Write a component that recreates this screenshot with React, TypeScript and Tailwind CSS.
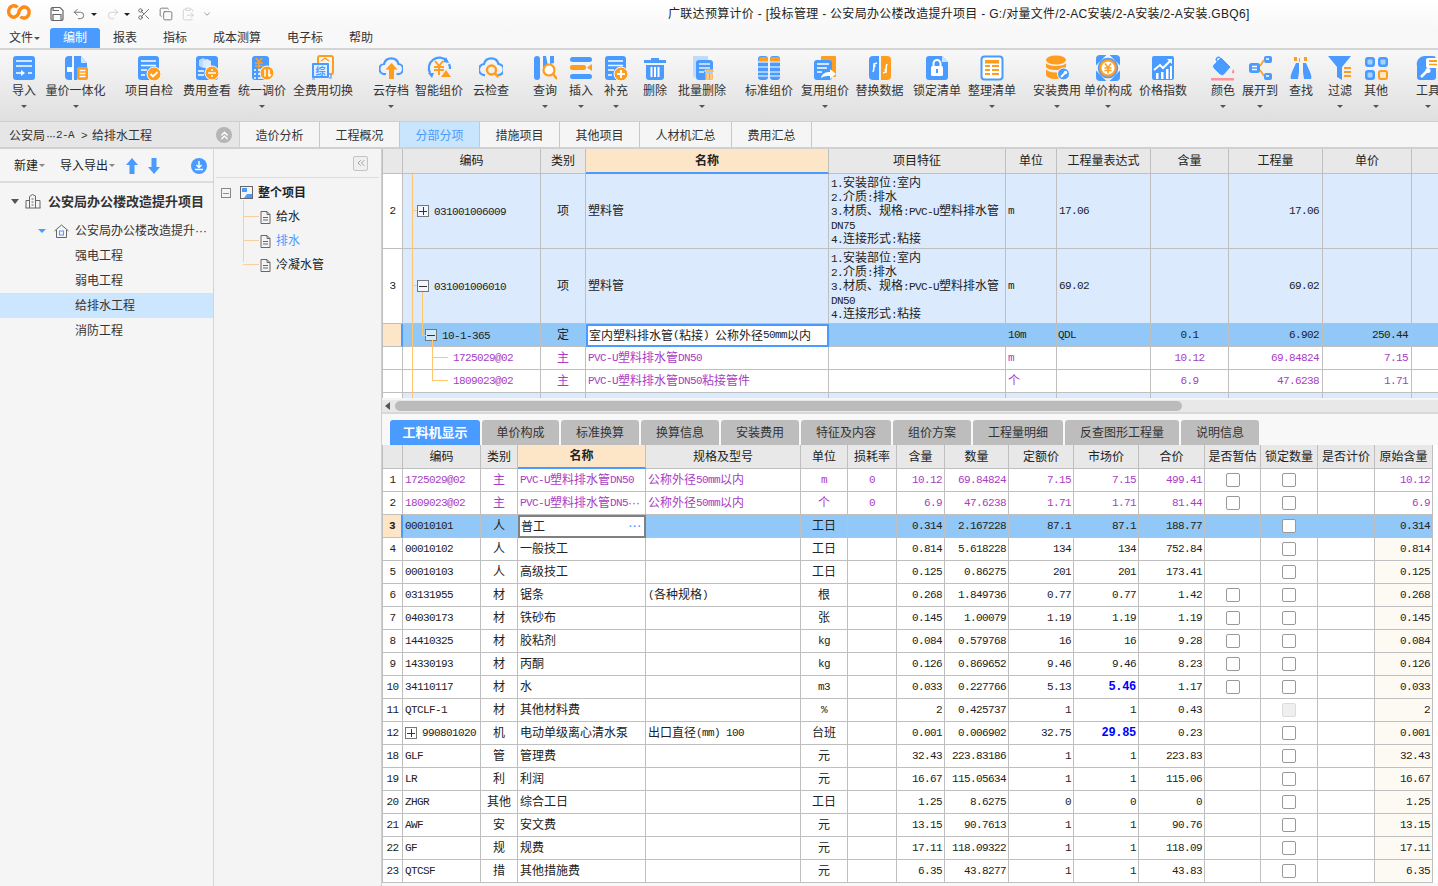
import React from "react";
import { Undo2, Redo2, Scissors, Copy, ClipboardPaste, ChevronDown, ChevronsUp, ChevronsLeft } from "lucide-react";

const B = "#4a9bff";
const O = "#ff9d1e";
const W = "#ffffff";

function T({ s }: { s: string }) {
  const parts = s.split(/([\x00-\x7f]+)/).filter(Boolean);
  return (
    <>
      {parts.map((p, i) =>
        /^[\x00-\x7f]+$/.test(p) ? (
          <span key={i} className="font-['Liberation_Mono',monospace] text-[11px] tracking-[-0.6px] whitespace-pre">{p}</span>
        ) : (
          <span key={i}>{p}</span>
        )
      )}
    </>
  );
}

const icons: Record<string, React.ReactNode> = {
  import: (<>
    <rect x="1" y="1" width="22" height="24" rx="3" fill={B} />
    <path d="M4 6h16M4 11h16M4 18h7M16 18h4" stroke={W} strokeWidth="1.6" />
    <path d="M9 15l4 3-4 3z" fill={W} />
  </>),
  qty: (<>
    <path d="M5 1h3v24H5a4 4 0 0 1-4-4V5a4 4 0 0 1 4-4z" fill={B} />
    <path d="M10 1h7l6 7v5H13v12h-3z" fill={B} />
    <path d="M17 1l6 7h-6z" fill="#cfe4ff" />
    <rect x="3" y="12" width="6" height="5" fill={W} />
    <rect x="13" y="12" width="11" height="13" rx="2" fill={O} />
    <path d="M15.5 15.5h6M15.5 18.5h6M15.5 21.5h6" stroke={W} strokeWidth="1.5" />
  </>),
  check: (<>
    <rect x="1" y="1" width="21" height="24" rx="3" fill={B} />
    <path d="M4 6h15M4 10.500h15M4 15h6M4 20h4" stroke={W} strokeWidth="1.500" />
    <circle cx="17" cy="19" r="7" fill={O} stroke={W} />
    <path d="M13.500 19l2.500 2.500 4.500-4.500" stroke={W} strokeWidth="1.800" fill="none" />
  </>),
  view: (<>
    <rect x="1" y="1" width="22" height="24" rx="3" fill={B} />
    <path d="M4 5l4-2 4 2v6l-4 2-4-2z" fill="#bcd9ff" />
    <path d="M8 6l4-2 4 2v6l-4 2-4-2z" fill="#dcebff" />
    <path d="M3 16h6M3 20h6" stroke={W} strokeWidth="1.500" />
    <circle cx="17" cy="18" r="7" fill={O} stroke={W} />
    <path d="M13 18h8" stroke={W} strokeWidth="1.500" />
    <circle cx="17" cy="15" r="1" fill={W} /><circle cx="17" cy="21" r="1" fill={W} />
  </>),
  price: (<>
    <rect x="2" y="1" width="17" height="24" rx="3" fill={B} />
    <path d="M6 3l3 4 3-4M5 8h8M5 11h8M9 7v7" stroke={O} strokeWidth="1.600" fill="none" />
    <path d="M4 15h2M8 15h4M4 19h2M8 19h4M4 23h2M8 23h4" stroke={W} strokeWidth="1.300" />
    <circle cx="17" cy="18" r="7" fill={O} stroke={W} />
    <path d="M15 14.500v7M19 14.500v7M19 21.500l2-2" stroke={W} strokeWidth="1.600" fill="none" />
  </>),
  all: (<>
    <rect x="7" y="1" width="15" height="18" rx="2" fill="none" stroke={O} strokeWidth="2" />
    <path d="M10 6l4-3 4 3M11 9h6" stroke={O} strokeWidth="1.400" fill="none" />
    <rect x="1" y="8" width="17" height="15" rx="1" fill={B} />
    <rect x="3" y="10" width="13" height="11" fill="#e2efff" />
    <text x="9.500" y="19.500" textAnchor="middle" fontSize="10" fill={B} fontWeight="700">综</text>
    <path d="M20 19v4h-2M1 24h3" stroke={B} strokeWidth="1.200" fill="none" />
  </>),
  cloudUp: (<>
    <path d="M7 19H6a5 5 0 0 1-1-10 7.500 7.500 0 0 1 14.500 0 5 5 0 0 1-1 10h-1" fill="none" stroke={B} strokeWidth="2.200" />
    <path d="M12.500 8l6 6.500h-3.500V24h-5v-9.500H6.500z" fill={O} />
  </>),
  smart: (<>
    <path d="M20 6A10.500 10.500 0 0 0 3 18M5 21" fill="none" stroke={B} strokeWidth="2.200" />
    <path d="M22 9a10 10 0 0 1 1 5" fill="none" stroke={B} strokeWidth="2.200" />
    <path d="M19 2l3 6-6-1zM5 23l-4-5 6 0z" fill={B} />
    <path d="M8 6l4 5 4-5M7 12h10M7 15h10M12 11v9" stroke={O} strokeWidth="2" fill="none" />
    <path d="M19 15l5 7H14z" fill={O} />
  </>),
  cloudFind: (<>
    <path d="M6 20a5.500 5.500 0 0 1-1-11 7.500 7.500 0 0 1 14.500 0 5.500 5.500 0 0 1-.5 11" fill="none" stroke={B} strokeWidth="2.200" />
    <circle cx="12.500" cy="15" r="4.500" fill="none" stroke={O} strokeWidth="2.400" />
    <path d="M16 18.500l3.500 3.500" stroke={O} strokeWidth="2.600" />
  </>),
  query: (<>
    <rect x="1" y="1" width="6" height="24" rx="3" fill={B} />
    <path d="M10 1h3l2 10-5 6z" fill={B} />
    <path d="M17 1h4v7l-4 1z" fill={B} />
    <circle cx="16" cy="15" r="5.500" fill={W} stroke={O} strokeWidth="2.200" />
    <path d="M20 19l4 5" stroke={O} strokeWidth="2.400" />
  </>),
  insert: (<>
    <rect x="1" y="2" width="22" height="5" rx="2.500" fill={B} />
    <rect x="1" y="10" width="16" height="5" rx="2" fill={O} />
    <path d="M23 9v7l-5-3.500z" fill={O} />
    <rect x="1" y="19" width="22" height="5" rx="2.500" fill={B} />
  </>),
  add: (<>
    <rect x="1" y="1" width="21" height="24" rx="3" fill={B} />
    <path d="M4 6h15M4 10.500h15M4 15h6M4 20h4" stroke={W} strokeWidth="1.500" />
    <circle cx="17" cy="19" r="7" fill={O} stroke={W} />
    <path d="M13 19h8M17 15v8" stroke={W} strokeWidth="2" />
  </>),
  del: (<>
    <path d="M8 3h8v2h7v3H1V5h7z" fill={B} />
    <path d="M3 10h18v12a3 3 0 0 1-3 3H6a3 3 0 0 1-3-3z" fill={B} />
    <path d="M8.500 12v10M12 12v10M15.500 12v10" stroke={W} strokeWidth="2" />
  </>),
  batch: (<>
    <path d="M3 1h15v22H6a3 3 0 0 1-3-3z" fill="#bfdcff" />
    <rect x="6" y="5" width="17" height="20" rx="3" fill={B} />
    <path d="M9 9h11M9 13h11M9 17h5" stroke="#e4f0ff" strokeWidth="1.300" />
    <path d="M15 15h9v2h-9zM16 18h7v7h-7z" fill={O} stroke={W} strokeWidth=".6" />
    <path d="M18 19v5M21 19v5" stroke={W} />
  </>),
  std: (<>
    <rect x="1" y="1" width="10" height="24" rx="3" fill={B} />
    <rect x="13" y="1" width="10" height="24" rx="3" fill={B} />
    <path d="M2 5.500a3 3 0 0 1 2-3.500h5a3 3 0 0 1 2 3.500v1H1zM13 5.500a3 3 0 0 1 2-3.500h5a3 3 0 0 1 3 3.500v1H13z" fill={O} />
    <path d="M1 7h10M13 7h10M1 12h10M13 12h10M1 17h10M13 17h10M1 21h10M13 21h10" stroke={W} strokeWidth="1.200" />
  </>),
  reuse: (<>
    <rect x="8" y="1" width="15" height="21" rx="1" fill={O} />
    <rect x="1" y="5" width="18" height="20" rx="3" fill={B} />
    <path d="M4 9h12M4 13h10M4 17h5" stroke={W} strokeWidth="1.400" />
    <path d="M8 23c1-5 5-6 9-6v-3l6 5-6 5v-3c-3 0-6 0-9 2z" fill={W} />
  </>),
  swap: (<>
    <path d="M5 1h6v24H5a4 4 0 0 1-4-4V5a4 4 0 0 1 4-4z" fill={B} />
    <path d="M13 1h6a4 4 0 0 1 4 4v16a4 4 0 0 1-4 4h-6z" fill={O} />
    <path d="M9 8l-3 1 1 3M6 9c0 4 0 6-1 8M15 18l3-1-1-3M18 17c0-4 0-6 1-8" stroke={W} strokeWidth="1.600" fill="none" />
  </>),
  lock: (<>
    <path d="M4 1h13l6 6v15a3 3 0 0 1-3 3H4a3 3 0 0 1-3-3V4a3 3 0 0 1 3-3z" fill={B} />
    <path d="M17 1l6 6h-6z" fill="#cfe4ff" />
    <rect x="6" y="11" width="12" height="10" rx="1.500" fill={W} />
    <path d="M8.500 11V8.500a3.500 3.500 0 0 1 7 0V11" stroke={W} strokeWidth="2" fill="none" />
    <rect x="11" y="14" width="2" height="4" fill={B} />
  </>),
  tidy: (<>
    <rect x="1.500" y="1.500" width="21" height="23" rx="3" fill="#fff" stroke={B} strokeWidth="2" />
    <rect x="5" y="5" width="14" height="3.500" fill={O} />
    <path d="M5 11h5M12 11h7M5 15h5M12 15h7M5 19h5M12 19h7" stroke={O} strokeWidth="2" />
  </>),
  install: (<>
    <ellipse cx="11" cy="5" rx="10" ry="4.500" fill={O} />
    <path d="M1 8c2 4 18 4 20 0v4c-2 4-18 4-20 0z" fill={O} />
    <path d="M1 14c2 4 12 4 15 3v6c-5 2-13 1-15-3z" fill={O} />
    <circle cx="18.500" cy="19" r="6" fill={B} stroke={W} />
    <path d="M16 22l4-4" stroke={W} strokeWidth="2" />
    <circle cx="20.500" cy="17.500" r="1.800" fill={W} />
  </>),
  unit: (<>
    <path d="M1 8V4a3 3 0 0 1 3-3h4zM16 1h4a3 3 0 0 1 3 3v4zM1 18v4a3 3 0 0 0 3 3h4zM23 18v4a3 3 0 0 1-3 3h-4z" fill={B} stroke={B} strokeWidth="2" />
    <circle cx="12" cy="13" r="9.500" fill={O} stroke={B} strokeWidth="1.500" />
    <circle cx="12" cy="13" r="6.500" fill={W} />
    <path d="M9 8.500l3 4 3-4M8.500 13h7M8.500 15.500h7M12 12.500V18.500" stroke={O} strokeWidth="1.600" fill="none" />
  </>),
  index: (<>
    <rect x="1" y="1" width="22" height="24" rx="2" fill={B} />
    <path d="M3 15l6-5 3 3 8-8" stroke={W} strokeWidth="2" fill="none" />
    <path d="M16 4h5v5z" fill={W} />
    <path d="M5 24v-6h2.500v6zM10 24v-7h2.500v7zM15 24v-10h2.500v10zM19 24V11h2v13z" fill={W} />
  </>),
  color: (<>
    <path d="M10 2l10 10-7 8c-2 1-3 0-4 0l-7-7c-1-2 0-3 1-4z" fill={B} stroke="#e9f2ff" />
    <path d="M9 3c-2-2-5 1-3 3l3 4" fill="none" stroke={B} strokeWidth="1.500" />
    <path d="M22 14c1.500 2 2 3 1 4s-2.500 0-2-1z" fill="#ff8f96" />
    <rect x="0" y="23" width="23" height="2.500" fill="#ff9298" />
  </>),
  expand: (<>
    <rect x="1" y="8" width="11" height="10" rx="2.500" fill={B} />
    <path d="M4 11.500h5M4 14.500h5" stroke={W} strokeWidth="1.300" />
    <rect x="16" y="1" width="8" height="7" rx="2" fill={B} />
    <rect x="16" y="18" width="8" height="7" rx="2" fill={B} />
    <path d="M18 4h3M18 21h3" stroke={W} strokeWidth="1.400" />
    <path d="M12 11l4-6M12 15l4 6" stroke={O} strokeWidth="1.600" />
  </>),
  find: (<>
    <path d="M7 8h3v9l-1 7H2c-1-2 0-4 1-7z" fill={B} />
    <path d="M14 8h3l4 9c1 3 2 5 1 7h-7l-1-7z" fill={B} />
    <path d="M5 2h3v4H5zM15 2h3v4h-3zM10 3h1v4h-1z" fill={O} />
  </>),
  filter: (<>
    <path d="M0 1h23l-9 11v13l-5-3V12z" fill={B} />
    <path d="M16 13h7M16 17h7M16 21h7" stroke={O} strokeWidth="1.800" />
  </>),
  other: (<>
    <rect x="1" y="2" width="10" height="10" rx="3" fill={B} />
    <rect x="14" y="2" width="10" height="10" rx="3" fill={B} />
    <rect x="1" y="15" width="10" height="10" rx="3" fill={B} />
    <rect x="15" y="16" width="8" height="8" rx="2" fill="#ffe7c8" stroke={O} strokeWidth="2" />
    <rect x="3.500" y="4.500" width="5" height="5" rx="1" fill="#a9d0ff" />
    <rect x="16.500" y="4.500" width="5" height="5" rx="1" fill="#a9d0ff" />
    <rect x="3.500" y="17.500" width="5" height="5" rx="1" fill="#a9d0ff" />
  </>),
  tool: (<>
    <path d="M9 1h8a3 3 0 0 1 3 3v18a3 3 0 0 1-3 3H4a3 3 0 0 1-3-3V11a8 8 0 0 1 8-10z" fill={B} />
    <rect x="10" y="3" width="14" height="10" rx="2" fill={W} />
    <path d="M13 6h8" stroke={O} strokeWidth="2" /><path d="M13 9.500h8" stroke={O} strokeWidth="1.500" />
    <path d="M5 22l6-6" stroke={W} strokeWidth="2.500" /><circle cx="12" cy="15.500" r="2.500" fill={W} />
  </>),
};

type RibbonItem = [string, string, string, boolean];
const ribbon: RibbonItem[] = [
  ["导入", "import", "ml-[4px] w-[40px]", true],
  ["量价一体化", "qty", "w-[63px]", true],
  ["项目自检", "check", "ml-[13px] w-[58px]", false],
  ["费用查看", "view", "w-[58px]", false],
  ["统一调价", "price", "w-[52px]", true],
  ["全费用切换", "all", "w-[70px]", false],
  ["云存档", "cloudUp", "ml-[9px] w-[48px]", true],
  ["智能组价", "smart", "w-[48px]", false],
  ["云检查", "cloudFind", "w-[56px]", false],
  ["查询", "query", "ml-[6px] w-[40px]", true],
  ["插入", "insert", "w-[32px]", true],
  ["补充", "add", "w-[38px]", true],
  ["删除", "del", "w-[40px]", false],
  ["批量删除", "batch", "w-[54px]", true],
  ["标准组价", "std", "ml-[12px] w-[56px]", false],
  ["复用组价", "reuse", "w-[56px]", true],
  ["替换数据", "swap", "w-[53px]", false],
  ["锁定清单", "lock", "w-[62px]", false],
  ["整理清单", "tidy", "w-[48px]", true],
  ["安装费用", "install", "ml-[17px] w-[48px]", true],
  ["单价构成", "unit", "w-[54px]", true],
  ["价格指数", "index", "w-[56px]", false],
  ["颜色", "color", "ml-[14px] w-[36px]", true],
  ["展开到", "expand", "w-[38px]", true],
  ["查找", "find", "w-[44px]", false],
  ["过滤", "filter", "w-[34px]", true],
  ["其他", "other", "w-[38px]", true],
  ["工具", "tool", "ml-[18px] w-[30px]", true],
];

function Caret({ c = "border-t-[#555]" }: { c?: string }) {
  return <span className={`inline-block w-0 h-0 border-l-[3px] border-r-[3px] border-t-[3px] border-l-transparent border-r-transparent ${c}`} />;
}

function TitleBar() {
  return (
    <div className="h-[28px] flex items-center bg-gradient-to-b from-white to-[#f8f8f8] text-[#333]">
      <svg width="24" height="18" viewBox="0 0 24 18" className="ml-[7px] -mt-[4px]" fill="none">
        <path d="M10.500 4.500C8 1.500 3 2.500 1.900 7c-1 4 2 8 6 7 1.500-.5 3-2 4.500-5" stroke="#ff8a14" strokeWidth="3.400" />
        <path d="M13.500 13.500c2 2.500 7.500 2 8.500-3 .800-4-2-7-5.500-6.500-2 .5-3.500 2-5 5" stroke="#ff8a14" strokeWidth="3.400" />
      </svg>
      <svg width="16" height="16" viewBox="0 0 16 16" className="ml-[18px]" fill="none" stroke="#666" strokeWidth="1.200">
        <path d="M3 1.500h8l3 3V13a1.500 1.500 0 0 1-1.500 1.500h-9A1.500 1.500 0 0 1 2 13V3z" />
        <path d="M4 14.500V8.500h8v6M4 1.500v3h6" />
      </svg>
      <Undo2 className="ml-[7px] w-[14px] h-[14px] text-[#666]" strokeWidth={1.5} />
      <span className="ml-[5px] inline-flex"><Caret c="border-t-[#222]" /></span>
      <Redo2 className="ml-[9px] w-[14px] h-[14px] text-[#ccc]" strokeWidth={1.5} />
      <span className="ml-[4px] inline-flex"><Caret c="border-t-[#222]" /></span>
      <Scissors className="ml-[7px] w-[14px] h-[14px] text-[#555]" strokeWidth={1.4} />
      <Copy className="ml-[8px] w-[14px] h-[14px] text-[#666]" strokeWidth={1.4} />
      <ClipboardPaste className="ml-[8px] w-[14px] h-[14px] text-[#ccc]" strokeWidth={1.4} />
      <ChevronDown className="ml-[7px] w-[10px] h-[10px] text-[#888]" strokeWidth={2} />
      <span className="ml-[456px] whitespace-nowrap text-[12px] tracking-[0.3px] text-[#222]">广联达预算计价 - [投标管理 - 公安局办公楼改造提升项目 - G:/对量文件/2-AC安装/2-A安装/2-A安装.GBQ6]</span>
    </div>
  );
}

function MenuBar() {
  return (
    <div className="h-[20px] flex items-stretch bg-[#f8f8f8] text-[12px] text-[#333]">
      <span className="ml-[9px] w-[41px] flex items-center gap-[1px]">文件<Caret /></span>
      <span className="w-[50px] flex items-center justify-center bg-[#4a9bff] text-white rounded-t-[3px]">编制</span>
      <span className="ml-[13px] w-[24px] flex items-center">报表</span>
      <span className="ml-[26px] w-[24px] flex items-center">指标</span>
      <span className="ml-[26px] w-[48px] flex items-center">成本测算</span>
      <span className="ml-[26px] w-[36px] flex items-center">电子标</span>
      <span className="ml-[26px] w-[24px] flex items-center">帮助</span>
    </div>
  );
}

function Ribbon() {
  return (
    <div className="h-[74px] border-t-2 border-[#d4d4d4] bg-gradient-to-b from-[#f8f8f8] to-[#dfdfdf] flex overflow-hidden border-b border-b-[#cfcfcf] text-[12px] text-[#333]">
      {ribbon.map(([label, icon, cls, caret]) => (
        <div key={label} className={`${cls} shrink-0 flex flex-col items-center pt-[5px]`}>
          <svg width="24" height="26" viewBox="0 0 24 26" className="shrink-0">{icons[icon]}</svg>
          <span className="mt-[2px] h-[17px] leading-[17px] whitespace-nowrap">{label}</span>
          {caret && <span className="mt-[5px] flex"><Caret /></span>}
        </div>
      ))}
    </div>
  );
}

const topTabs = [
  ["造价分析", "w-[80px]"], ["工程概况", "w-[80px]"], ["分部分项", "w-[80px]"], ["措施项目", "w-[80px]"],
  ["其他项目", "w-[80px]"], ["人材机汇总", "w-[92px]"], ["费用汇总", "w-[80px]"],
];

function TabBar() {
  return (
    <div className="h-[27px] flex bg-[#f5f5f5] text-[12px] text-[#333] border-b-2 border-[#d0d0d0]">
      <div className="w-[240px] bg-[#e6e6e6] flex items-center pl-[9px] pr-[8px] pt-[2px] border-r border-[#d0d0d0] relative">
        <span>公安局</span><span className="ml-[1px] mr-[1px] tracking-[-1px]">···</span><T s="2-A" /><span className="ml-[7px]"><T s=">" /></span><span className="ml-[5px]">给排水工程</span>
        <span className="absolute left-[216px] top-[5px] w-[16px] h-[16px] rounded-full bg-[#b5b5b5] flex items-center justify-center">
          <ChevronsUp className="w-[13px] h-[13px] text-white" strokeWidth={2.5} />
        </span>
      </div>
      {topTabs.map(([t, w]) => (
        <div key={t} className={`${w} flex items-center justify-center pt-[2px] border-r border-[#c8c8c8] ${t === "分部分项" ? "bg-[#c9e5fe] text-[#4a9bff]" : ""}`}>{t}</div>
      ))}
    </div>
  );
}

function Doc() {
  return (
    <svg width="11" height="13" viewBox="0 0 11 13" fill="none" stroke="#666" strokeWidth="1">
      <path d="M1 .5h6l3 3v9H1zM7 .5v3h3M3 6.500h5M3 9h5" />
    </svg>
  );
}

function Sidebar() {
  return (
    <div className="w-[214px] shrink-0 bg-[#f5f5f5] border-r border-[#d4d4d4] text-[12px] text-[#333] flex flex-col">
      <div className="h-[34px] pt-[1px] flex items-center border-b-2 border-[#dcdcdc] relative">
        <span className="ml-[14px] text-[#222]">新建</span><span className="ml-[1px] flex"><Caret c="border-t-[#888]" /></span>
        <span className="ml-[15px] text-[#222]">导入导出</span><span className="ml-[1px] flex"><Caret c="border-t-[#888]" /></span>
        <svg width="12" height="16" viewBox="0 0 12 16" className="ml-[11px]"><path d="M6 0l6 7H8.500v9h-5V7H0z" fill={B} /></svg>
        <svg width="12" height="16" viewBox="0 0 12 16" className="ml-[10px]"><path d="M6 16l6-7H8.500V0h-5v9H0z" fill={B} /></svg>
        <span className="ml-[31px] w-[16px] h-[16px] rounded-full bg-[#4a9bff] flex items-center justify-center">
          <svg width="10" height="10" viewBox="0 0 10 10" fill="none" stroke="white" strokeWidth="1.400"><path d="M5 0v6M2.500 4L5 6.500 7.500 4M1 8.500h8" /></svg>
        </span>
      </div>
      <div className="pt-[3px] flex flex-col">
        <div className="h-[30px] flex items-center">
          <span className="ml-[11px] flex"><span className="w-0 h-0 border-l-[4px] border-r-[4px] border-t-[5px] border-l-transparent border-r-transparent border-t-[#555]" /></span>
          <svg width="16" height="16" viewBox="0 0 16 16" className="ml-[6px]" fill="none" stroke="#666"><path d="M4.500 15V3.500l3-2 3 1.500V15M1 15V7.500h3.500M11 7.500h4V15M.5 15h15M6.500 6h2M6.500 9h2M6.500 12h2" /></svg>
          <span className="ml-[7px] font-bold text-[13px] text-[#333] whitespace-nowrap">公安局办公楼改造提升项目</span>
        </div>
        <div className="h-[27px] pt-[3px] flex items-center">
          <span className="ml-[38px] flex"><span className="w-0 h-0 border-l-[4px] border-r-[4px] border-t-[4px] border-l-transparent border-r-transparent border-t-[#4a9bff]" /></span>
          <svg width="15" height="14" viewBox="0 0 15 14" className="ml-[8px]" fill="none" stroke="#666"><path d="M.5 7l7-6 7 6M2.500 6v7.500h10V6" /><rect x="5.500" y="7" width="4" height="4" stroke={B} /></svg>
          <span className="ml-[6px] whitespace-nowrap">公安局办公楼改造提升···</span>
        </div>
        {["强电工程", "弱电工程", "给排水工程", "消防工程"].map((t) => (
          <div key={t} className={`h-[25px] flex items-center pl-[75px] ${t === "给排水工程" ? "bg-[#cbe6fe]" : ""}`}>{t}</div>
        ))}
      </div>
    </div>
  );
}

function MidPanel() {
  return (
    <div className="w-[168px] shrink-0 bg-[#f4f4f4] border-r border-[#cfcfcf] text-[12px] text-[#222] flex flex-col relative">
      <div className="h-[29px] mx-[2px] border-b border-[#dcdcdc] flex items-center justify-end pr-[11px]">
        <span className="w-[15px] h-[15px] border border-[#c4c4c4] rounded-[2px] flex items-center justify-center bg-[#efefef]">
          <ChevronsLeft className="w-[12px] h-[12px] text-[#888]" strokeWidth={1.5} />
        </span>
      </div>
      <div className="relative pt-[3px]">
        <div className="h-[24px] flex items-center">
          <span className="ml-[7px] w-[10px] h-[10px] border border-[#888] flex items-center justify-center"><span className="w-[6px] h-[1px] bg-[#4a9bff]" /></span>
          <svg width="14" height="14" viewBox="0 0 14 14" className="ml-[9px]" fill="none"><rect x=".5" y=".5" width="12" height="12" stroke="#666" /><rect x="2" y="2" width="5" height="4" fill={B} /><path d="M4 12l3-4 5 0v4z" fill={B} /></svg>
          <span className="ml-[4px] font-bold">整个项目</span>
        </div>
        {["给水", "排水", "冷凝水管"].map((t) => (
          <div key={t} className="h-[24px] flex items-center relative">
            <span className="absolute left-[29px] top-[11px] w-[16px] h-[1px] bg-[#f9cf9c]" />
            <span className="ml-[46px] flex"><Doc /></span>
            <span className={`ml-[5px] ${t === "排水" ? "text-[#4a9bff]" : ""}`}>{t}</span>
          </div>
        ))}
        <span className="absolute left-[29px] top-[22px] w-[1px] h-[62px] bg-[#f9cf9c]" />
      </div>
    </div>
  );
}

const bd = "border-r border-b border-[#bfbfbf]";

function HeadCell({ t, active }: { t: string; active?: boolean }) {
  return (
    <div className={`${bd} flex items-center justify-center whitespace-nowrap overflow-hidden ${active ? "bg-[#fde6c8] font-bold border-b-2 border-b-[#4a9bff]" : "bg-[#e8e8e8]"}`}>{t}</div>
  );
}

const fline = (dn: string) => [`1.安装部位:室内`, `2.介质:排水`, `3.材质、规格:PVC-U塑料排水管`, dn, `4.连接形式:粘接`];

function Box({ sign, cls = "" }: { sign: "+" | "-"; cls?: string }) {
  return (
    <span className={`w-[12px] h-[12px] bg-white/60 border border-[#777] flex items-center justify-center relative shrink-0 ${cls}`}>
      <span className="w-[8px] h-[1px] bg-[#333]" />
      {sign === "+" && <span className="absolute w-[1px] h-[8px] bg-[#333]" />}
    </span>
  );
}

function UpperItem({ n, code, sign, dn, qty }: { n: string; code: string; sign: "+" | "-"; dn: string; qty: string }) {
  const c = `${bd} bg-[#dceafd] flex items-center`;
  return (
    <>
      <div className={`${bd} bg-white flex items-center justify-center`}><T s={n} /></div>
      <div className={`${c} pl-[14px]`}><Box sign={sign} /><span className="ml-[5px]"><T s={code} /></span></div>
      <div className={`${c} justify-center`}>项</div>
      <div className={`${c} pl-[2px]`}>塑料管</div>
      <div className={`${c} flex-col !items-start justify-center pl-[2px]`}>
        {fline(dn).map((l) => <div key={l} className="h-[14px] leading-[14px] whitespace-nowrap"><T s={l} /></div>)}
      </div>
      <div className={`${c} pl-[2px]`}><T s="m" /></div>
      <div className={`${c} pl-[2px]`}><T s={qty} /></div>
      <div className={c} />
      <div className={`${c} justify-end pr-[3px]`}><T s={qty} /></div>
      <div className={c} />
      <div className={c} />
    </>
  );
}

function SubItem({ code, name, unit, hl, qty, price }: { code: string; name: string; unit: string; hl: string; qty: string; price: string }) {
  const c = `${bd} bg-white flex items-center text-[#a93cc4]`;
  return (
    <>
      <div className={c} />
      <div className={`${c} pl-[50px]`}><T s={code} /></div>
      <div className={`${c} justify-center`}>主</div>
      <div className={`${c} pl-[2px]`}><T s={name} /></div>
      <div className={c} />
      <div className={`${c} pl-[2px]`}><T s={unit} /></div>
      <div className={c} />
      <div className={`${c} justify-center`}><T s={hl} /></div>
      <div className={`${c} justify-end pr-[3px]`}><T s={qty} /></div>
      <div className={`${c} justify-end pr-[3px]`}><T s={price} /></div>
      <div className={c} />
    </>
  );
}

function UpperTable() {
  const h = `${bd} bg-[#92c8f7] flex items-center`;
  return (
    <div className="h-[249px] overflow-hidden relative bg-white">
      <div className="grid grid-cols-[20px_138px_45px_243px_177px_51px_94px_78px_94px_89px_29px] grid-rows-[25px_75px_75px_23px_23px_23px_23px] border-l border-[#bfbfbf]">
        {["", "编码", "类别", "名称", "项目特征", "单位", "工程量表达式", "含量", "工程量", "单价", ""].map((t, i) => (
          <HeadCell key={i} t={t} active={t === "名称"} />
        ))}
        <UpperItem n="2" code="031001006009" sign="+" dn="DN75" qty="17.06" />
        <UpperItem n="3" code="031001006010" sign="-" dn="DN50" qty="69.02" />
        <div className={`${bd} bg-[#fde6c8] border-r-2 border-r-[#4a9bff]`} />
        <div className={`${h} pl-[22px]`}><Box sign="-" cls="bg-transparent" /><span className="ml-[5px]"><T s="10-1-365" /></span></div>
        <div className={`${h} justify-center`}>定</div>
        <div className="bg-white border-2 border-[#4a9bff] flex items-center pl-[1px] whitespace-nowrap overflow-hidden"><T s="室内塑料排水管(粘接) 公称外径50mm以内" /></div>
        <div className={h} />
        <div className={`${h} pl-[2px]`}><T s="10m" /></div>
        <div className={`${h} pl-[1px]`}><T s="QDL" /></div>
        <div className={`${h} justify-center`}><T s="0.1" /></div>
        <div className={`${h} justify-end pr-[3px]`}><T s="6.902" /></div>
        <div className={`${h} justify-end pr-[3px]`}><T s="250.44" /></div>
        <div className={h} />
        <SubItem code="1725029@02" name="PVC-U塑料排水管DN50" unit="m" hl="10.12" qty="69.84824" price="7.15" />
        <SubItem code="1809023@02" name="PVC-U塑料排水管DN50粘接管件" unit="个" hl="6.9" qty="47.6238" price="1.71" />
        {Array.from({ length: 11 }).map((_, i) => (
          <div key={i} className={`${bd} ${i === 0 ? "bg-white" : "bg-[#dceafd]"}`} />
        ))}
      </div>
      <span className="absolute left-[30px] top-[25px] w-[1px] h-[224px] bg-[#ffc670]" />
      <span className="absolute left-[30px] top-[61px] w-[5px] h-[1px] bg-[#ffc670]" />
      <span className="absolute left-[30px] top-[136px] w-[5px] h-[1px] bg-[#ffc670]" />
      <span className="absolute left-[40px] top-[143px] w-[1px] h-[43px] bg-[#ffc670]" />
      <span className="absolute left-[40px] top-[186px] w-[4px] h-[1px] bg-[#ffc670]" />
      <span className="absolute left-[50px] top-[191px] w-[1px] h-[40px] bg-[#ffc670]" />
      <span className="absolute left-[50px] top-[208px] w-[16px] h-[1px] bg-[#ffc670]" />
      <span className="absolute left-[50px] top-[231px] w-[16px] h-[1px] bg-[#ffc670]" />
    </div>
  );
}

function ScrollBar() {
  return (
    <div className="h-[16px] bg-[#f5f5f5] pt-[2px] border-b-2 border-[#d8d8d8]">
      <div className="h-[12px] bg-[#e8e8e8] flex items-center pl-[3px]">
        <span className="w-0 h-0 border-t-[4px] border-b-[4px] border-r-[5px] border-t-transparent border-b-transparent border-r-[#555]" />
        <span className="ml-[5px] w-[787px] h-[10px] rounded-[5px] bg-[#bbbbbb]" />
      </div>
    </div>
  );
}

const lowerTabs: [string, string][] = [
  ["工料机显示", "w-[90px]"], ["单价构成", "w-[77px]"], ["标准换算", "w-[78px]"], ["换算信息", "w-[78px]"], ["安装费用", "w-[78px]"],
  ["特征及内容", "w-[90px]"], ["组价方案", "w-[78px]"], ["工程量明细", "w-[90px]"], ["反查图形工程量", "w-[114px]"], ["说明信息", "w-[78px]"],
];

function LowerTabs() {
  return (
    <div className="h-[31px] bg-[#f8f8f8] pt-[6px] pl-[8px] flex gap-[2px] text-[12px] text-[#333]">
      {lowerTabs.map(([t, w]) => (
        <div key={t} className={`${w} rounded-t-[3px] flex items-center justify-center ${t === "工料机显示" ? "bg-[#4a9bff] text-white font-bold text-[13px]" : "bg-[#bdbdbd]"}`}>{t}</div>
      ))}
    </div>
  );
}

type Row = { n: string; code: string; type: string; name: string; spec?: string; unit: string; loss?: string; hl: string; qty: string; dj: string; sc: string; hj: string; zg?: boolean; ys?: string; disabled?: boolean; blue?: boolean; plus?: boolean };

const rows: Row[] = [
  { n: "1", code: "1725029@02", type: "主", name: "PVC-U塑料排水管DN50", spec: "公称外径50mm以内", unit: "m", loss: "0", hl: "10.12", qty: "69.84824", dj: "7.15", sc: "7.15", hj: "499.41", zg: true },
  { n: "2", code: "1809023@02", type: "主", name: "PVC-U塑料排水管DN5···", spec: "公称外径50mm以内", unit: "个", loss: "0", hl: "6.9", qty: "47.6238", dj: "1.71", sc: "1.71", hj: "81.44", zg: true },
  { n: "3", code: "00010101", type: "人", name: "普工", unit: "工日", hl: "0.314", qty: "2.167228", dj: "87.1", sc: "87.1", hj: "188.77" },
  { n: "4", code: "00010102", type: "人", name: "一般技工", unit: "工日", hl: "0.814", qty: "5.618228", dj: "134", sc: "134", hj: "752.84" },
  { n: "5", code: "00010103", type: "人", name: "高级技工", unit: "工日", hl: "0.125", qty: "0.86275", dj: "201", sc: "201", hj: "173.41" },
  { n: "6", code: "03131955", type: "材", name: "锯条", spec: "(各种规格)", unit: "根", hl: "0.268", qty: "1.849736", dj: "0.77", sc: "0.77", hj: "1.42", zg: true },
  { n: "7", code: "04030173", type: "材", name: "铁砂布", unit: "张", hl: "0.145", qty: "1.00079", dj: "1.19", sc: "1.19", hj: "1.19", zg: true },
  { n: "8", code: "14410325", type: "材", name: "胶粘剂", unit: "kg", hl: "0.084", qty: "0.579768", dj: "16", sc: "16", hj: "9.28", zg: true },
  { n: "9", code: "14330193", type: "材", name: "丙酮", unit: "kg", hl: "0.126", qty: "0.869652", dj: "9.46", sc: "9.46", hj: "8.23", zg: true },
  { n: "10", code: "34110117", type: "材", name: "水", unit: "m3", hl: "0.033", qty: "0.227766", dj: "5.13", sc: "5.46", hj: "1.17", zg: true, blue: true },
  { n: "11", code: "QTCLF-1", type: "材", name: "其他材料费", unit: "%", hl: "2", qty: "0.425737", dj: "1", sc: "1", hj: "0.43", disabled: true },
  { n: "12", code: "990801020", type: "机", name: "电动单级离心清水泵", spec: "出口直径(mm) 100", unit: "台班", hl: "0.001", qty: "0.006902", dj: "32.75", sc: "29.85", hj: "0.23", blue: true, plus: true },
  { n: "18", code: "GLF", type: "管", name: "管理费", unit: "元", hl: "32.43", qty: "223.83186", dj: "1", sc: "1", hj: "223.83" },
  { n: "19", code: "LR", type: "利", name: "利润", unit: "元", hl: "16.67", qty: "115.05634", dj: "1", sc: "1", hj: "115.06" },
  { n: "20", code: "ZHGR", type: "其他", name: "综合工日", unit: "工日", hl: "1.25", qty: "8.6275", dj: "0", sc: "0", hj: "0" },
  { n: "21", code: "AWF", type: "安", name: "安文费", unit: "元", hl: "13.15", qty: "90.7613", dj: "1", sc: "1", hj: "90.76" },
  { n: "22", code: "GF", type: "规", name: "规费", unit: "元", hl: "17.11", qty: "118.09322", dj: "1", sc: "1", hj: "118.09" },
  { n: "23", code: "QTCSF", type: "措", name: "其他措施费", unit: "元", hl: "6.35", qty: "43.8277", dj: "1", sc: "1", hj: "43.83" },
];

function Chk({ disabled }: { disabled?: boolean }) {
  return <span className={`w-[14px] h-[14px] rounded-[2px] border ${disabled ? "bg-[#efefef] border-[#dcdcdc]" : "bg-white border-[#999]"}`} />;
}

function LowerRow({ r }: { r: Row }) {
  const sel = r.n === "3";
  const pink = r.n === "1" || r.n === "2";
  const c = `${bd} flex items-center ${sel ? "bg-[#92c8f7]" : "bg-white"} ${pink ? "text-[#a93cc4]" : ""}`;
  const right = `${c} justify-end pr-[2px]`;
  const mid = `${c} justify-center`;
  return (
    <>
      <div className={`${bd} flex items-center justify-center ${sel ? "bg-[#fde6c8] font-bold border-r-2 border-r-[#4a9bff]" : "bg-white"}`}><T s={r.n} /></div>
      <div className={`${c} pl-[2px]`}>
        {r.plus && <span className="mr-[5px]"><Box sign="+" /></span>}
        <T s={r.code} />
      </div>
      <div className={mid}>{r.type}</div>
      {sel ? (
        <div className="border-2 border-[#808080] bg-white flex items-center pl-[1px] pr-[2px] justify-between"><span>普工</span><span className="text-[#4a9bff] font-bold text-[10px] tracking-[1px]">···</span></div>
      ) : (
        <div className={`${c} pl-[2px] whitespace-nowrap overflow-hidden`}><T s={r.name} /></div>
      )}
      <div className={`${c} pl-[2px]`}>{r.spec && <T s={r.spec} />}</div>
      <div className={mid}><T s={r.unit} /></div>
      <div className={mid}>{r.loss && <T s={r.loss} />}</div>
      <div className={right}><T s={r.hl} /></div>
      <div className={right}><T s={r.qty} /></div>
      <div className={right}><T s={r.dj} /></div>
      <div className={right}>
        {r.blue ? <span className="font-['Liberation_Mono',monospace] text-[12px] tracking-[-0.3px] font-bold text-[#0000ff]">{r.sc}</span> : <T s={r.sc} />}
      </div>
      <div className={right}><T s={r.hj} /></div>
      <div className={mid}>{r.zg && <Chk />}</div>
      <div className={mid}><Chk disabled={r.disabled} /></div>
      <div className={c} />
      <div className={`${right} ${!sel && !pink ? "!bg-[#fdf9f3]" : ""}`}><T s={r.ys ?? r.hl} /></div>
    </>
  );
}

function LowerTable() {
  return (
    <div className="grid grid-cols-[20px_78px_37px_128px_155px_47px_49px_48px_64px_65px_65px_66px_56px_57px_57px_58px] grid-rows-[24px] auto-rows-[23px] border-l border-[#bfbfbf] bg-white">
      {["", "编码", "类别", "名称", "规格及型号", "单位", "损耗率", "含量", "数量", "定额价", "市场价", "合价", "是否暂估", "锁定数量", "是否计价", "原始含量"].map((t, i) => (
        <HeadCell key={i} t={t} active={t === "名称"} />
      ))}
      {rows.map((r) => <LowerRow key={r.n} r={r} />)}
    </div>
  );
}

export default function App() {
  return (
    <div className="w-[1438px] h-[886px] overflow-hidden flex flex-col bg-[#f5f5f5] font-['Liberation_Sans','Noto_Sans_CJK_SC',sans-serif] text-[12px] leading-none text-[#222]">
      <TitleBar />
      <MenuBar />
      <Ribbon />
      <TabBar />
      <div className="flex flex-1 min-h-0">
        <Sidebar />
        <MidPanel />
        <div className="flex-1 min-w-0 flex flex-col bg-[#f8f8f8] overflow-hidden">
          <UpperTable />
          <ScrollBar />
          <LowerTabs />
          <LowerTable />
        </div>
      </div>
    </div>
  );
}
